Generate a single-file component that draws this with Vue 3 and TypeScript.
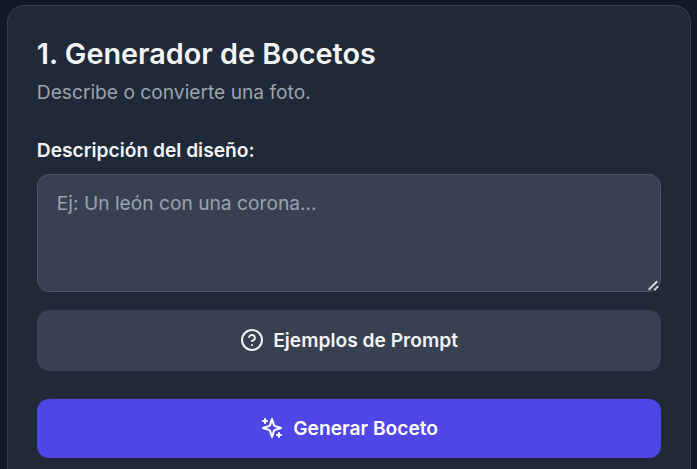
<script setup lang="ts">
import { ref } from 'vue'

const description = ref('')
</script>

<template>
  <div class="page">
    <section class="card">
      <h2 class="title">1. Generador de Bocetos</h2>
      <p class="subtitle">Describe o convierte una foto.</p>

      <label class="label" for="desc">Descripción del diseño:</label>
      <div class="field">
        <textarea id="desc" v-model="description" class="input" placeholder="Ej: Un león con una corona..."></textarea>
        <svg class="grip" viewBox="0 0 12 12" fill="none" stroke-linecap="square">
          <path d="M1.5 10 8.5 3" stroke="#d1d5db" stroke-width="2" />
          <path d="M7 10.5 9.5 8" stroke="#d1d5db" stroke-width="2" />
          <path d="M3.5 10.8 10 4.3M8.6 11 10.5 9.1" stroke="#1f2937" stroke-width="1" />
        </svg>
      </div>

      <button class="btn btn-help">
        <svg class="icon" viewBox="0 0 24 24" fill="none" stroke="currentColor" stroke-width="2" stroke-linecap="round" stroke-linejoin="round">
          <circle cx="12" cy="12" r="10" />
          <path d="M9.09 9a3 3 0 0 1 5.83 1c0 2-3 3-3 3" />
          <path d="M12 17h.01" />
        </svg>
        Ejemplos de Prompt
      </button>

      <button class="btn btn-main">
        <svg class="icon" viewBox="0 0 24 24" fill="none" stroke="currentColor" stroke-width="2" stroke-linecap="round" stroke-linejoin="round">
          <path d="m12 3-1.912 5.813a2 2 0 0 1-1.275 1.275L3 12l5.813 1.912a2 2 0 0 1 1.275 1.275L12 21l1.912-5.813a2 2 0 0 1 1.275-1.275L21 12l-5.813-1.912a2 2 0 0 1-1.275-1.275L12 3Z" />
          <path d="M5 3v4" />
          <path d="M19 17v4" />
          <path d="M3 5h4" />
          <path d="M17 19h4" />
        </svg>
        Generar Boceto
      </button>
    </section>
  </div>
</template>

<style>
html,
body {
  background: #111827;
  overflow: hidden;
}
</style>

<style scoped>
.page {
  padding: 5px 6.4px 0 7px;
  font-family: Inter, "Liberation Sans", sans-serif;
}

.card {
  display: flex;
  flex-direction: column;
  box-sizing: border-box;
  padding: 28px 28.8px;
  background: #1f2937;
  border: 1px solid #374151;
  border-radius: 17px;
}

.title {
  margin: 0;
  font-size: 28.8px;
  line-height: 40px;
  font-weight: 600;
  color: #f3f4f6;
}

.subtitle {
  margin: 0 0 26px;
  font-size: 19.2px;
  line-height: 36px;
  color: #9ca3af;
}

.label {
  margin-bottom: 10px;
  font-size: 19.2px;
  line-height: 28px;
  font-weight: 600;
  color: #f3f4f6;
}

.field {
  position: relative;
  margin-bottom: 18px;
}

.input {
  display: block;
  box-sizing: border-box;
  width: 100%;
  height: 118px;
  padding: 14px 19px;
  background: #374151;
  border: 1px solid #4b5563;
  border-radius: 12px;
  color: #f3f4f6;
  font-family: inherit;
  font-size: 19.2px;
  line-height: 28px;
  resize: none;
}

.input::placeholder {
  color: #9ca3af;
  opacity: 1;
}

.grip {
  position: absolute;
  right: 1px;
  bottom: 1px;
  width: 12px;
  height: 12px;
  pointer-events: none;
}

.btn {
  display: flex;
  align-items: center;
  justify-content: center;
  gap: 9.6px;
  padding: 0 0 2px;
  border: none;
  border-radius: 12px;
  color: #fff;
  font-family: inherit;
  font-size: 19.2px;
  font-weight: 600;
}

.btn-help {
  height: 61px;
  margin-bottom: 28px;
  background: #374151;
  color: #f3f4f6;
}

.btn-main {
  height: 59px;
  background: #4f46e5;
}

.icon {
  width: 24px;
  height: 24px;
  flex-shrink: 0;
}
</style>
